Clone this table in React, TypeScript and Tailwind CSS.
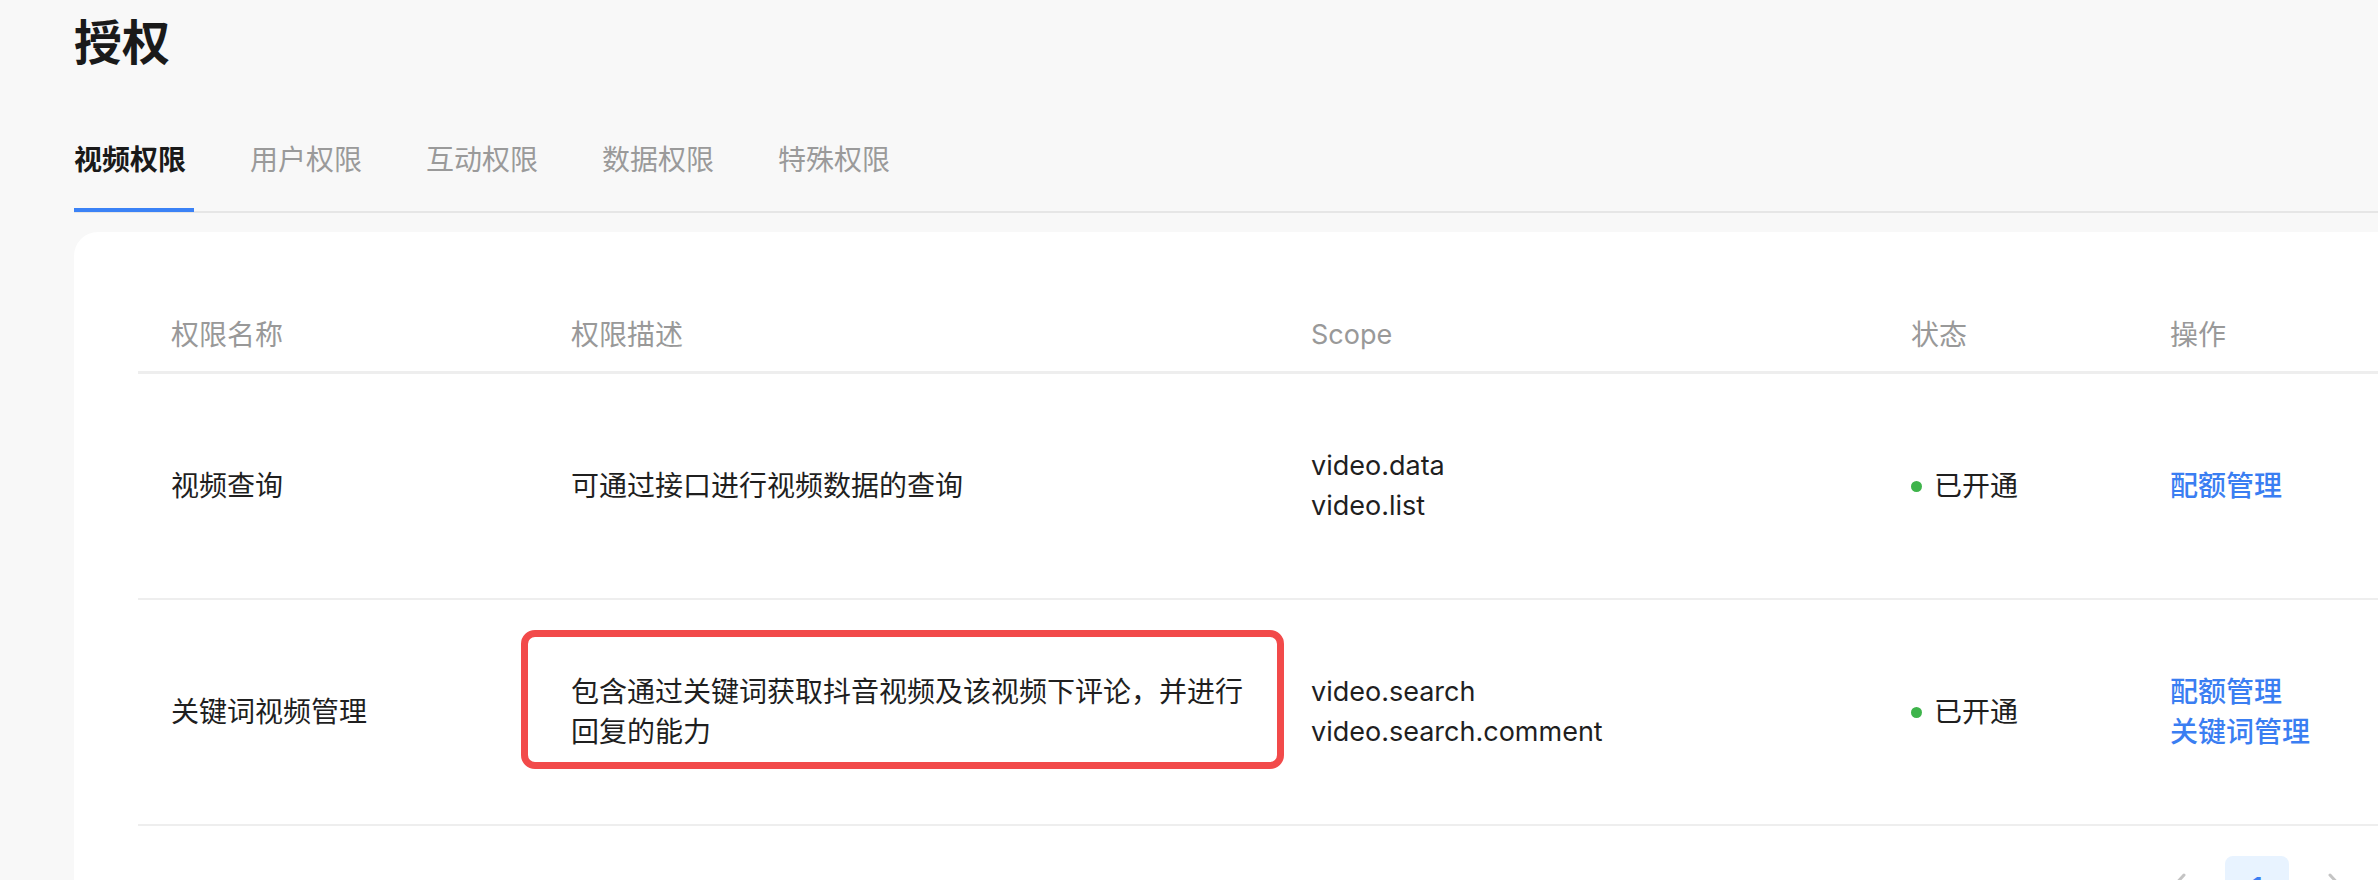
import React from 'react';

const tabs = ['视频权限', '用户权限', '互动权限', '数据权限', '特殊权限'];

const rows = [
  {
    name: '视频查询',
    desc: '可通过接口进行视频数据的查询',
    scopes: ['video.data', 'video.list'],
    actions: ['配额管理'],
    marked: false,
  },
  {
    name: '关键词视频管理',
    desc: '包含通过关键词获取抖音视频及该视频下评论，并进行回复的能力',
    scopes: ['video.search', 'video.search.comment'],
    actions: ['配额管理', '关键词管理'],
    marked: true,
  },
];

const cols = 'grid grid-cols-[400px_740px_600px_259px_300px]';

function Chevron({ dir }: { dir: 'left' | 'right' }) {
  return (
    <svg width="16" height="30" viewBox="0 0 16 30" fill="none">
      <polyline
        points={dir === 'left' ? '14,2 2,15 14,28' : '2,2 14,15 2,28'}
        stroke="#c4c4c4"
        strokeWidth="3"
        strokeLinecap="round"
        strokeLinejoin="round"
      />
    </svg>
  );
}

export default function App() {
  return (
    <div className="h-screen w-full overflow-hidden bg-[#f8f8f8] font-['Inter','Noto_Sans_CJK_SC',sans-serif] text-[#1f1f1f]">
      <div className="pl-[74px] pt-[19px]">
        <h1 className="text-[48px] leading-[48px] font-bold text-[#1a1a1a]">授权</h1>

        <div className="mt-[79px] flex gap-[56px] border-b-2 border-[#e6e6e6]">
          {tabs.map((t, i) =>
            i === 0 ? (
              <div key={t} className="-mb-[1px] w-[120px] border-b-4 border-[#3b82f6] pb-[34px] text-[28px] leading-[28px] font-semibold text-[#1a1a1a]">
                {t}
              </div>
            ) : (
              <div key={t} className="w-[120px] pb-[37px] text-[28px] leading-[28px] text-[#9a9a9a]">
                {t}
              </div>
            )
          )}
        </div>

        <div className="mt-[19px] w-[2427px] rounded-[24px] bg-white pl-[64px] pr-[64px] pt-[67px] pb-[40px]">
          <div className={`${cols} h-[75px] items-center border-b-[3px] border-[#eeeeee] text-[28px] leading-[40px] text-[#999999]`}>
            <div className="px-[33px]">权限名称</div>
            <div className="px-[33px]">权限描述</div>
            <div className="px-[33px] text-[27px]">Scope</div>
            <div className="px-[33px]">状态</div>
            <div className="px-[33px]">操作</div>
          </div>

          {rows.map((r) => (
            <div key={r.name} className={`${cols} items-center border-b-2 border-[#eeeeee] py-[72px] text-[28px] leading-[40px]`}>
              <div className="px-[33px]">{r.name}</div>
              <div className="relative px-[33px]">
                {r.desc}
                {r.marked && (
                  <div className="absolute -top-[42px] -bottom-[17px] -left-[17px] -right-[6px] rounded-[14px] border-[7px] border-[#f24a4a]" />
                )}
              </div>
              <div className="px-[33px] text-[27px]">
                {r.scopes.map((s) => (
                  <div key={s}>{s}</div>
                ))}
              </div>
              <div className="flex items-center gap-[12px] px-[33px]">
                <span className="h-[11px] w-[11px] rounded-full bg-[#3eb44b]" />
                <span>已开通</span>
              </div>
              <div className="px-[33px] font-medium text-[#3a7ef2]">
                {r.actions.map((a) => (
                  <div key={a}>{a}</div>
                ))}
              </div>
            </div>
          ))}

          <div className="mt-[30px] flex w-[2299px] items-center justify-end gap-[15px] pr-[69px]">
            <div className="flex h-[64px] w-[64px] items-center justify-center">
              <Chevron dir="left" />
            </div>
            <div className="flex h-[64px] w-[64px] items-center justify-center rounded-[8px] bg-[#e8f3ff] text-[28px] font-medium text-[#3a7ef2]">
              1
            </div>
            <div className="flex h-[64px] w-[64px] items-center justify-center">
              <Chevron dir="right" />
            </div>
          </div>
        </div>
      </div>
    </div>
  );
}
